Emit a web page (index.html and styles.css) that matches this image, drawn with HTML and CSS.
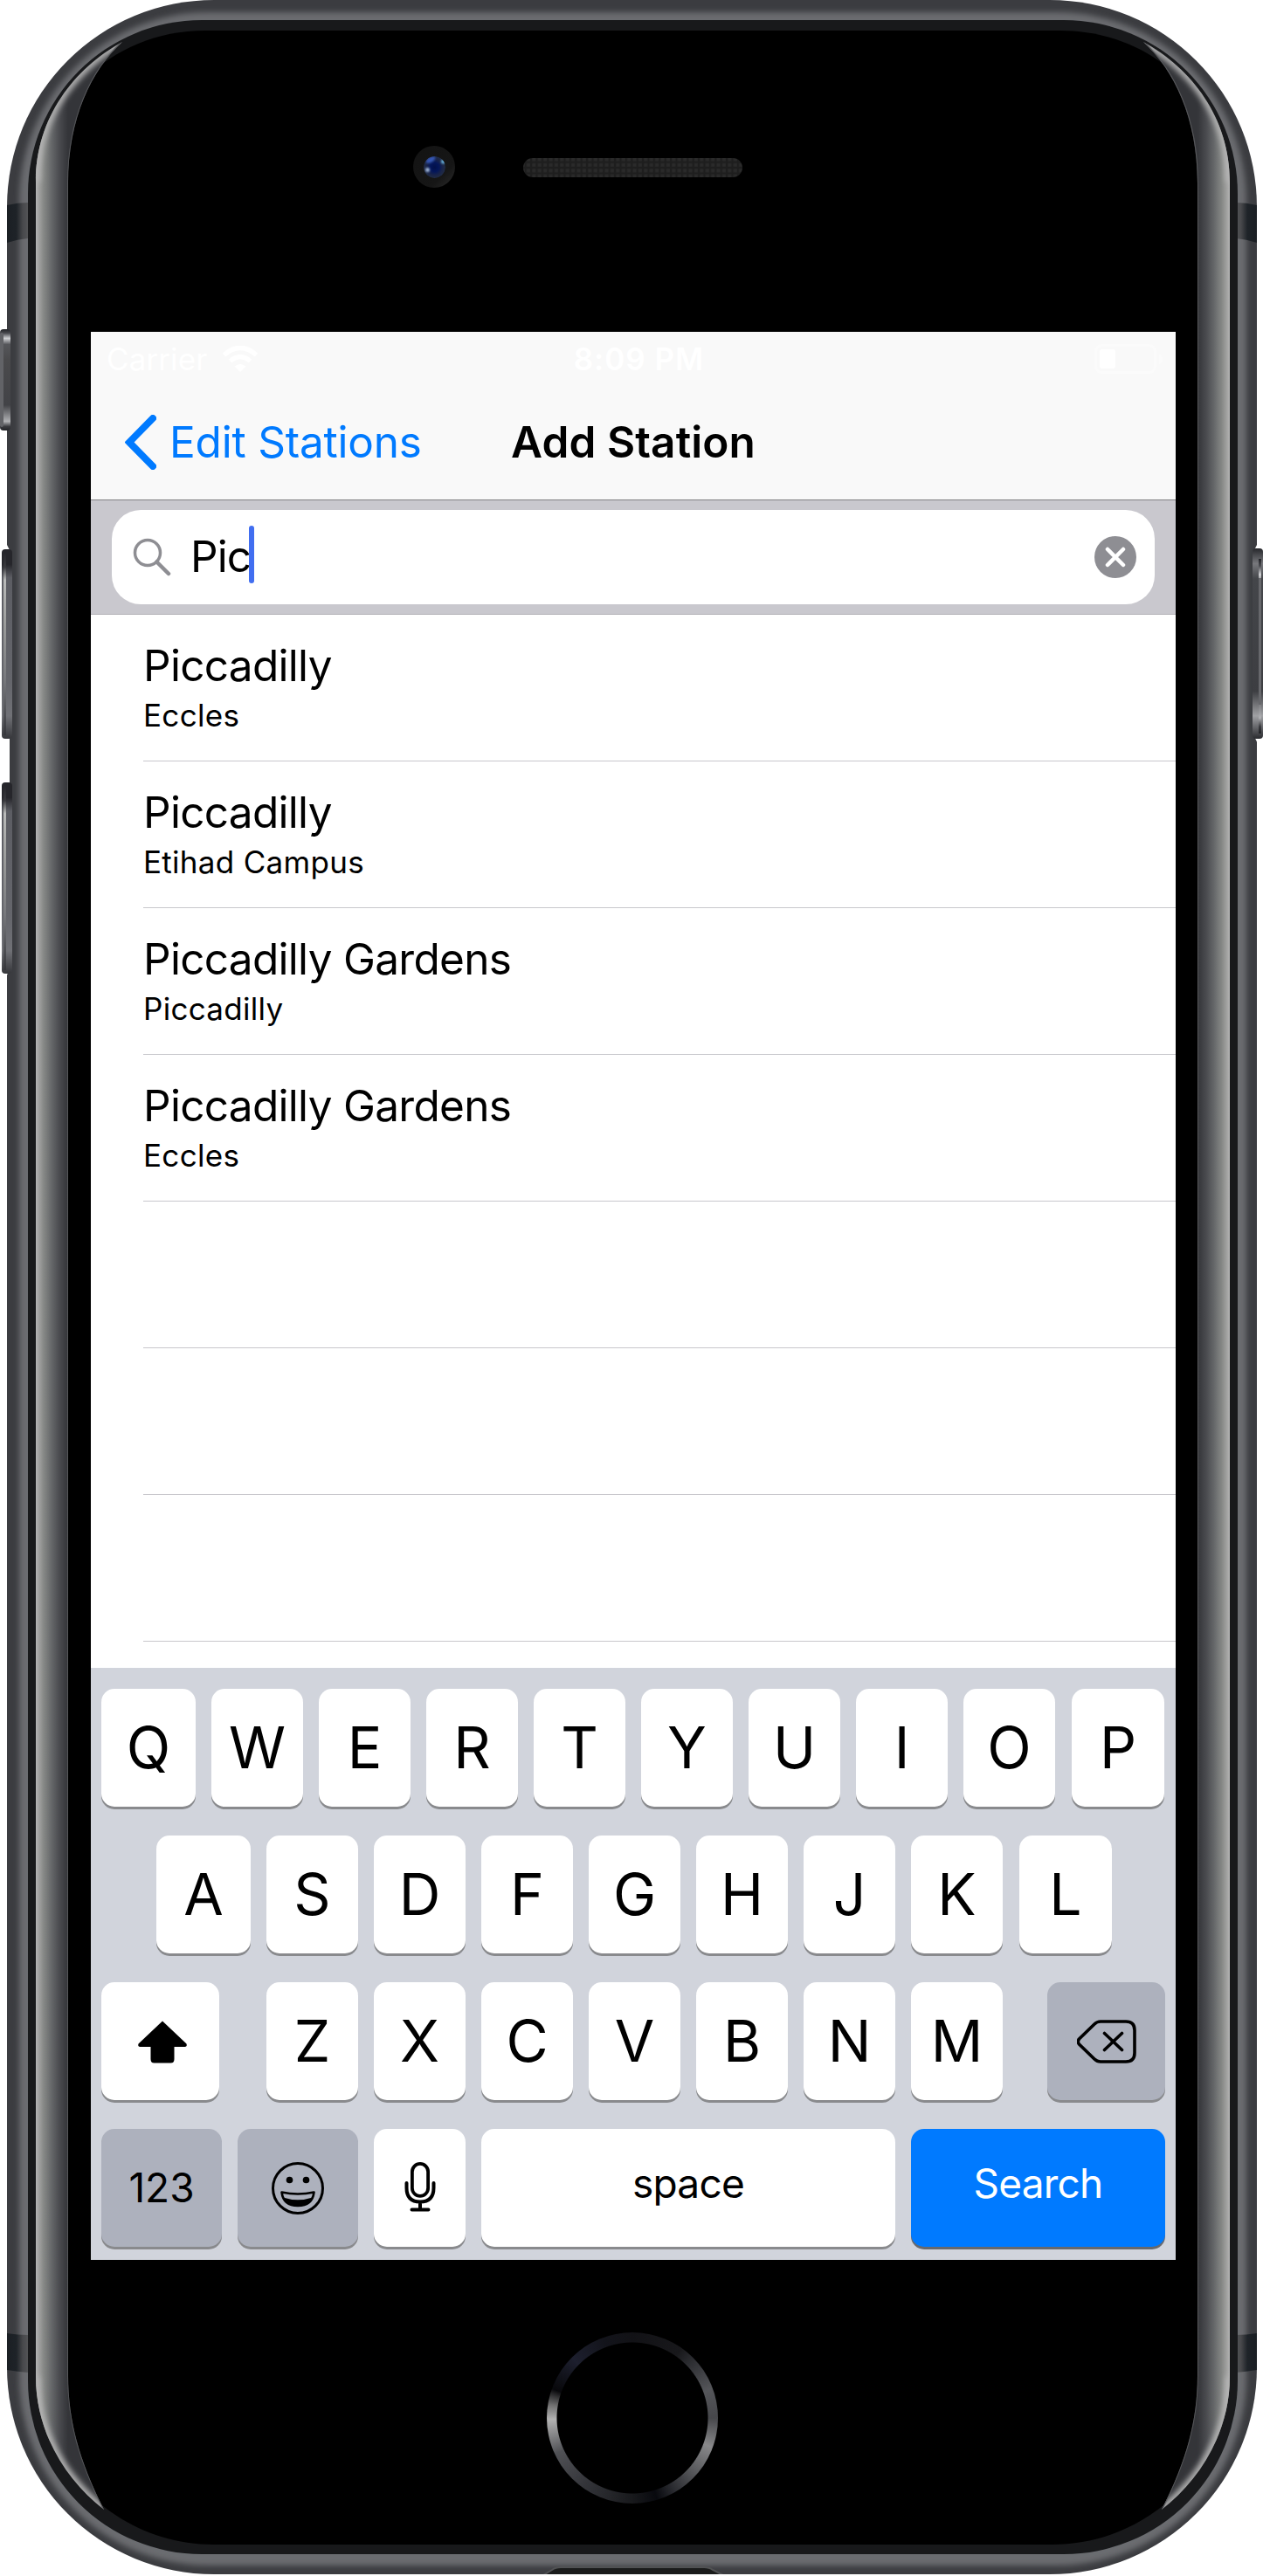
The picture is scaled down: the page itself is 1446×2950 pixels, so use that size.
FILE: index.html
```html
<!DOCTYPE html>
<html lang="en">
<head>
<meta charset="utf-8">
<title>Add Station</title>
<link rel="stylesheet" href="styles.css">
</head>
<body>
<div class="device">
  <svg class="frame" viewBox="0 0 1446 2950" aria-hidden="true">
    <defs>
      <linearGradient id="silver" gradientUnits="userSpaceOnUse" x1="41" y1="0" x2="78" y2="0">
        <stop offset="0" stop-color="#b6b6b6"/><stop offset=".08" stop-color="#a4a4a3"/><stop offset=".25" stop-color="#858785"/><stop offset=".5" stop-color="#646668"/><stop offset=".72" stop-color="#4b4c50"/><stop offset=".9" stop-color="#3b3c40"/><stop offset="1" stop-color="#343539"/>
      </linearGradient>
      <linearGradient id="antenna" x1="0" x2="1" y1="0" y2="0">
        <stop offset="0" stop-color="#1b1f24"/><stop offset=".45" stop-color="#1e2328"/><stop offset=".75" stop-color="#47484b"/><stop offset="1" stop-color="#535456"/>
      </linearGradient>
      <linearGradient id="mute" x1="0" x2="0" y1="0" y2="1">
        <stop offset="0" stop-color="#222327"/><stop offset=".04" stop-color="#4a4b50"/><stop offset=".09" stop-color="#d0d1d4"/><stop offset=".15" stop-color="#55565a"/><stop offset=".3" stop-color="#4a4a4c"/><stop offset=".75" stop-color="#424347"/><stop offset=".91" stop-color="#b0b1b4"/><stop offset=".96" stop-color="#3a3b3f"/><stop offset="1" stop-color="#222327"/>
      </linearGradient>
      <linearGradient id="volume" x1="0" x2="0" y1="0" y2="1">
        <stop offset="0" stop-color="#26262b"/><stop offset=".08" stop-color="#26262b"/><stop offset=".15" stop-color="#5c5d63"/><stop offset=".7" stop-color="#65666c"/><stop offset=".88" stop-color="#707176"/><stop offset="1" stop-color="#36373b"/>
      </linearGradient>
      <linearGradient id="shine" x1="0" x2="0" y1="0" y2="1">
        <stop offset="0" stop-color="#26262b"/><stop offset=".08" stop-color="#3a3a3e"/><stop offset=".15" stop-color="#b9bab9"/><stop offset=".4" stop-color="#9a9b9a"/><stop offset=".7" stop-color="#77787c"/><stop offset="1" stop-color="#36373b"/>
      </linearGradient>
      <linearGradient id="power" x1="0" x2="0" y1="0" y2="1">
        <stop offset="0" stop-color="#26272b"/><stop offset=".08" stop-color="#77787c"/><stop offset=".16" stop-color="#44464a"/><stop offset=".75" stop-color="#3d3e42"/><stop offset=".88" stop-color="#a0a1a4"/><stop offset="1" stop-color="#2a2b2f"/>
      </linearGradient>
      <radialGradient id="lens">
        <stop offset="0" stop-color="#02114a"/><stop offset=".4" stop-color="#04165a"/><stop offset=".75" stop-color="#1b2547"/><stop offset="1" stop-color="#202b45"/>
      </radialGradient>
      <linearGradient id="camera" x1="0" x2="1" y1="0" y2="1">
        <stop offset="0" stop-color="#131313"/><stop offset=".7" stop-color="#161616"/><stop offset="1" stop-color="#2c2c2c"/>
      </linearGradient>
      <pattern id="mesh" width="6.4" height="6.4" patternUnits="userSpaceOnUse">
        <rect width="6.4" height="6.4" fill="#1e1e1e"/><rect x="1.3" y="1.3" width="4" height="4" fill="#2a2a2a"/>
      </pattern>
      <filter id="soft" x="-5%" y="-5%" width="110%" height="110%"><feGaussianBlur stdDeviation="3"/></filter>
      <filter id="dot" x="-50%" y="-50%" width="200%" height="200%"><feGaussianBlur stdDeviation="1"/></filter>
      <clipPath id="lensClip"><circle cx="497.500" cy="191.500" r="12.500"/></clipPath>
      <clipPath id="body"><rect x="8" y="0" width="1431" height="2948" rx="237"/></clipPath>
      <path id="edge" d="M140 48C85 78 41 135 41 208V2722C41 2785 75 2840 119 2874C92 2820 78 2775 78 2720V210C78 135 105 80 140 48Z"/>
      <clipPath id="edgeClip"><use href="#edge"/></clipPath>
      <g id="side">
        <use href="#edge" fill="url(#silver)"/>
        <g clip-path="url(#edgeClip)">
          <path d="M140 48C85 78 41 135 41 208" fill="none" stroke="#b4b4b4" stroke-width="9" filter="url(#soft)"/>
          <path d="M41 2722C41 2785 75 2840 119 2874" fill="none" stroke="#b4b4b4" stroke-width="9" filter="url(#soft)"/>
          <path d="M119 2874C92 2820 78 2775 78 2720V210C78 135 105 80 140 48" fill="none" stroke="#56575a" stroke-width="2"/>
        </g>
      </g>
      <g id="bands">
        <path d="M8 235Q20 232 32 232V273Q20 274 8 278Z" fill="url(#antenna)"/>
        <path d="M8 2672Q20 2674 32 2674V2717Q20 2716 8 2714Z" fill="url(#antenna)"/>
      </g>
    </defs>

    <rect x="8" y="0" width="1431" height="2948" rx="237" fill="#3b3c40"/>
    <g clip-path="url(#body)">
      <rect x="22" y="14" width="1405" height="2924" rx="217" fill="#6b6c6f" filter="url(#soft)"/>
      <path d="M622 2949L632 2943Q636 2940 642 2940H806Q812 2940 816 2943L828 2949Z" fill="#1b1c1c" stroke="#515254" stroke-width="2"/>
    </g>
    <use href="#bands"/>
    <use href="#bands" transform="translate(1447 0) scale(-1 1)"/>
    <rect x="32" y="23" width="1385" height="2902" rx="199" fill="#18191b"/>
    <path d="M41 225C41 120 125 35 235 35H1214C1324 35 1408 120 1408 225V2710C1408 2823 1317 2914 1204 2914H245C132 2914 41 2823 41 2710Z"/>
    <use href="#side"/>
    <use href="#side" transform="translate(1449 0) scale(-1 1)"/>

    <path d="M7 622L11 630V1110L7 1119Z" fill="#fff"/>
    <path d="M1440 622L1436 630V843L1440 852Z" fill="#fff"/>
    <rect x="0" y="377" width="12" height="116" rx="4" fill="url(#mute)"/>
    <rect x="0" y="381" width="4" height="108" rx="2" fill="#626367"/>
    <rect x="2" y="629" width="12" height="217" rx="4" fill="url(#volume)"/>
    <rect x="4" y="633" width="3" height="209" fill="url(#shine)"/>
    <rect x="2" y="896" width="12" height="219" rx="4" fill="url(#volume)"/>
    <rect x="4" y="900" width="3" height="211" fill="url(#shine)"/>
    <rect x="1434" y="628" width="12" height="218" rx="4" fill="url(#power)"/>
    <rect x="1441" y="640" width="3" height="200" fill="url(#mute)"/>
    <rect x="1441" y="662" width="3" height="145" fill="#67686c"/>

    <circle cx="497" cy="191" r="24" fill="url(#camera)"/>
    <g clip-path="url(#lensClip)">
      <circle cx="497.500" cy="191.500" r="12.500" fill="url(#lens)"/>
      <ellipse cx="493" cy="183" rx="6" ry="3" transform="rotate(-30 493 183)" fill="#3456b4" filter="url(#dot)"/>
      <circle cx="507.500" cy="185" r="2.500" fill="#69b4e0" filter="url(#dot)"/>
      <circle cx="489.500" cy="194.500" r="2.500" fill="#9db4d6" filter="url(#dot)"/>
    </g>
    <rect x="599" y="181" width="251" height="22" rx="11" fill="url(#mesh)"/>
  </svg>

  <main class="screen">
    <div class="status">
      <div class="status-left">
        <span class="carrier">Carrier</span>
        <svg class="wifi" viewBox="0 0 42 30"><path d="M21 30L14.500 23.500Q21 18.500 27.500 23.500Z" fill="#fff"/><path d="M9.500 17.500Q21 8 32.500 17.500M2.500 10.500Q21 -5.500 39.500 10.500" fill="none" stroke="#fff" stroke-width="5.500"/></svg>
      </div>
      <span class="time">8:09 PM</span>
      <svg class="battery" viewBox="0 0 78 34"><rect x="1.500" y="1.500" width="68" height="31" rx="7" fill="none" stroke="#fbfbfb" stroke-width="3"/><rect x="6" y="6" width="18" height="22" rx="3" fill="#fff"/><path d="M74 11Q78 13 78 17T74 23Z" fill="#fbfbfb"/></svg>
    </div>
    <header class="nav">
      <a class="back"><svg class="chevron" viewBox="0 0 36 63"><path d="M32 4L5 31.500L32 59" fill="none" stroke="#007aff" stroke-width="8" stroke-linecap="round" stroke-linejoin="miter"/></svg><span>Edit Stations</span></a>
      <h1 class="title">Add Station</h1>
      <span></span>
    </header>
    <div class="search">
      <div class="field">
        <svg class="glass" viewBox="0 0 44 44"><circle cx="17" cy="17" r="14.500" fill="none" stroke="#8e8e93" stroke-width="3.500"/><path d="M27.500 27.500L41 41" stroke="#8e8e93" stroke-width="4.500" stroke-linecap="round"/></svg>
        <span class="query">Pic</span><span class="caret"></span>
        <svg class="clear" viewBox="0 0 48 48"><circle cx="24" cy="24" r="24" fill="#8e8e93"/><path d="M15 15L33 33M33 15L15 33" stroke="#fff" stroke-width="4.500" stroke-linecap="round"/></svg>
      </div>
    </div>
    <ul class="list">
      <li class="row"><span class="name">Piccadilly</span><span class="line">Eccles</span></li>
      <li class="row"><span class="name">Piccadilly</span><span class="line">Etihad Campus</span></li>
      <li class="row"><span class="name">Piccadilly Gardens</span><span class="line">Piccadilly</span></li>
      <li class="row"><span class="name">Piccadilly Gardens</span><span class="line">Eccles</span></li>
      <li class="row"></li>
      <li class="row"></li>
      <li class="row"></li>
    </ul>
    <div class="keyboard">
      <div class="keys">
        <b class="key first">Q</b><b class="key">W</b><b class="key">E</b><b class="key">R</b><b class="key">T</b><b class="key">Y</b><b class="key">U</b><b class="key">I</b><b class="key">O</b><b class="key last">P</b>
      </div>
      <div class="keys home-row">
        <b class="key first">A</b><b class="key">S</b><b class="key">D</b><b class="key">F</b><b class="key">G</b><b class="key">H</b><b class="key">J</b><b class="key">K</b><b class="key last">L</b>
      </div>
      <div class="keys">
        <b class="key shift"><svg width="58" height="50" viewBox="0 0 58 50"><path d="M29 1.500L56.500 27.500Q57.500 30.500 55 31H42.500V45Q42.500 49.500 38.500 49.500H19.500Q15.500 49.500 15.500 45V31H3Q.5 30.500 1.500 27.500Z"/></svg></b>
        <b class="key">Z</b><b class="key">X</b><b class="key">C</b><b class="key">V</b><b class="key">B</b><b class="key">N</b><b class="key">M</b>
        <b class="key delete"><svg width="68" height="50" viewBox="0 0 68 50"><path d="M27 2H56Q66 2 66 12V38Q66 48 56 48H27Q23 48 20 45L2.500 28Q0 25 2.500 22L20 5Q23 2 27 2Z" fill="none" stroke="#000" stroke-width="3.600"/><path d="M31.500 15.500L51.500 34.500M51.500 15.500L31.500 34.500" stroke="#000" stroke-width="3.600" stroke-linecap="round"/></svg></b>
      </div>
      <div class="keys">
        <b class="key numbers">123</b>
        <b class="key emoji"><svg width="60" height="60" viewBox="0 0 60 60"><circle cx="30" cy="30" r="28.500" fill="none" stroke="#000" stroke-width="3"/><circle cx="20.500" cy="20.500" r="3.800"/><circle cx="39.500" cy="20.500" r="3.800"/><path d="M11.500 34.500Q30 38.500 48.500 34.500Q46.500 50 30 50T11.500 34.500Z" fill="none" stroke="#000" stroke-width="2.600" stroke-linejoin="round"/><path d="M13 40.500Q30 46 47 40.500Q41 50.500 30 50.500T13 40.500Z"/></svg></b>
        <b class="key mic"><svg width="36" height="58" viewBox="0 0 36 58"><rect x="8.900" y="1.900" width="18.200" height="37" rx="9.100" fill="none" stroke="#000" stroke-width="3.800"/><path d="M2.500 24V29.500Q2.500 45.500 18 45.500T33.500 29.500V24M18 46V53.500M8.500 54.500H27.500" fill="none" stroke="#000" stroke-width="4" stroke-linecap="round"/></svg></b>
        <b class="key space">space</b>
        <b class="key go">Search</b>
      </div>
    </div>
  </main>
  <div class="home-button"></div>
</div>
</body>
</html>
```
FILE: styles.css
```css
* { box-sizing: border-box; }

body {
  margin: 0;
  background: #fff;
  font-family: Inter, "Liberation Sans", sans-serif;
  color: #000;
}

.device {
  position: relative;
  width: 1446px;
  height: 2950px;
  padding: 380px 100px 0 104px;
  overflow: hidden;
}

.frame {
  position: absolute;
  inset: 0;
  width: 1446px;
  height: 2950px;
}

.screen {
  position: relative;
  display: flex;
  flex-direction: column;
  width: 1242px;
  height: 2208px;
  background: #fff;
  overflow: hidden;
}

/* Status bar */
.status {
  display: grid;
  grid-template-columns: 1fr auto 1fr;
  align-items: center;
  height: 60px;
  padding: 0 15px 0 18px;
  background: #f9f9f9;
  color: #fff;
  font-size: 35px;
  line-height: 62px;
}

.status-left { display: flex; align-items: center; gap: 17px; }
.carrier { letter-spacing: 0.1px; }
.wifi { width: 42px; height: 30px; }
.time { padding-left: 10px; font-weight: 600; letter-spacing: 1px; }
.battery { width: 78px; height: 34px; justify-self: end; }

/* Navigation bar */
.nav {
  display: grid;
  grid-template-columns: 1fr auto 1fr;
  align-items: center;
  height: 133px;
  padding: 0 39px;
  background: #f9f9f9;
  border-bottom: 1px solid #808082;
  font-size: 49.500px;
  line-height: 60px;
}

.back { display: flex; align-items: center; gap: 15px; color: #007aff; letter-spacing: -0.2px; white-space: nowrap; }
.chevron { width: 36px; height: 63px; }
.title { margin: 0; font-size: 49.500px; font-weight: 600; letter-spacing: 0.1px; }

/* Search */
.search {
  height: 131px;
  padding: 11px 24px;
  background: #c9c8ce;
  border-bottom: 1px solid #b4b3b7;
}

.field {
  display: flex;
  align-items: center;
  height: 108px;
  padding: 0 21px 0 24px;
  background: #fff;
  border-radius: 33px;
  font-size: 49.500px;
}

.glass { width: 44px; height: 44px; }
.query { margin-left: 22px; padding-bottom: 3px; line-height: 100px; letter-spacing: -0.9px; }
.caret { width: 6px; height: 66px; margin: 0 auto 6px -2px; border-radius: 3px; background: #416ef0; }
.clear { width: 48px; height: 48px; }

/* Results */
.list { flex: 1; margin: 0; padding: 0 0 0 60px; list-style: none; overflow: hidden; }
.row { display: flex; flex-direction: column; height: 168px; padding-top: 28px; border-bottom: 1px solid #c8c7cc; }
.name { font-size: 49.500px; line-height: 60px; letter-spacing: -0.7px; }
.line { margin-top: 5px; font-size: 35px; line-height: 44px; letter-spacing: 0.3px; }

/* Keyboard */
.keyboard {
  display: flex;
  flex-direction: column;
  gap: 33px;
  height: 678px;
  padding: 24px 12px 0;
  background: #d1d4dc;
}

.keys { display: flex; gap: 18px; height: 135px; }
.home-row { padding-left: 63px; }

.key {
  display: flex;
  justify-content: center;
  align-items: center;
  flex: none;
  width: 105px;
  height: 135px;
  border-radius: 15px;
  background: #fff;
  box-shadow: 0 3px 0 #898a8d;
  font-size: 66px;
  font-weight: 400;
  line-height: 135px;
}

.first { width: 108px; }
.last { width: 106px; margin-left: 1px; }
.shift { width: 135px; margin-right: 36px; padding-left: 4px; }
.delete { width: 135px; margin-left: 33px; background: #adb1bd; }
.numbers { width: 138px; background: #adb1bd; font-size: 46px; }
.emoji { width: 138px; background: #adb1bd; }
.mic { padding-bottom: 2px; }
.space { width: 474px; font-size: 46px; letter-spacing: -0.8px; padding-bottom: 11px; }
.go { width: 291px; font-size: 46px; letter-spacing: -0.8px; padding-bottom: 11px; background: #007aff; color: #fff; box-shadow: 0 3px 0 #67696e; }

.home-button {
  position: relative;
  width: 196px;
  height: 196px;
  margin: 83px 0 0 522px;
  border-radius: 50%;
  background:
    radial-gradient(circle, #000 86px, transparent 87px),
    conic-gradient(#121216, #18181b 35deg, #2a2b2f 45deg, #55565a 70deg, #46474b 90deg, #88888a 110deg, #5a5b5e 130deg, #2a2b30 150deg, #08090e 163deg, #18191c 180deg, #333439 215deg, #505155 245deg, #b2b2b2 269deg, #707070 279deg, #08080b 290deg, #1d1f2e 315deg, #13141b 340deg, #121216);
}
```
